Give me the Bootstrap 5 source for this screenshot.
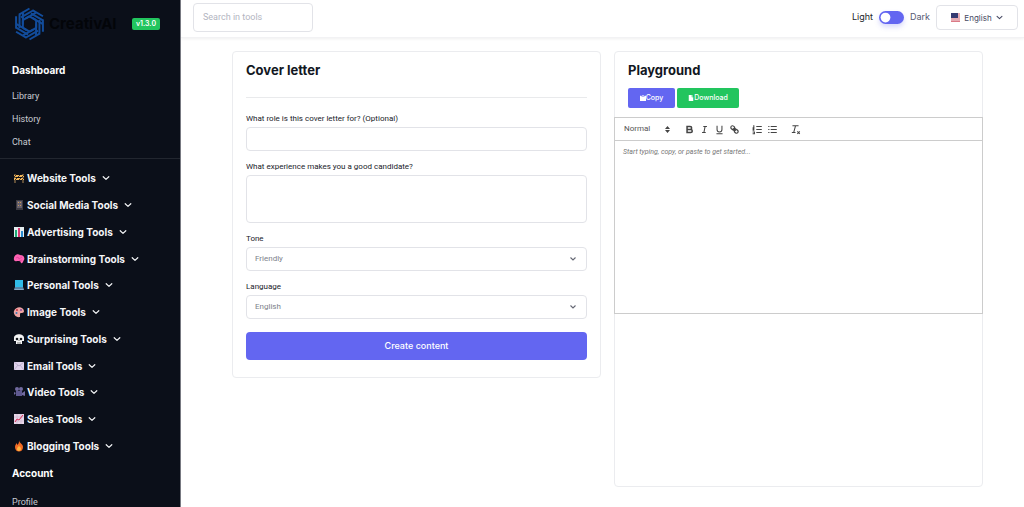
<!DOCTYPE html>
<html lang="en">
<head>
<meta charset="utf-8">
<meta name="viewport" content="width=device-width, initial-scale=1">
<title>CreativAI - Cover letter</title>
<link rel="stylesheet" href="https://cdn.jsdelivr.net/npm/bootstrap@5.3.0/dist/css/bootstrap.min.css">
<style>
:root{--indigo:#6366f1;--green:#22c55e;--line:#e2e3e8}
body{font-family:Inter,"Liberation Sans",sans-serif;font-size:9px;line-height:12px;color:#33353d;background:#fff}
a{color:inherit;text-decoration:none}
.sidebar{width:181px;height:100vh;background:#0b0f19;border-right:1px solid #777981;color:#f5f6f8}
.brand{height:48px;padding:0 20px 0 14px}
.brand-name{font-size:15px;font-weight:700;color:#030509;line-height:20px}
.version{background:var(--green);font-size:7px;font-weight:600;line-height:12px;padding:0 4px;border-radius:2px;color:#fff}
.side-head{font-size:10px;font-weight:700;line-height:20px;padding:0 12px}
.side-link{line-height:23px;padding:0 12px;color:#c9cbd1;font-weight:400;font-size:9px;font-family:Roboto,Inter,sans-serif}
.side-links{padding-top:5px}
.side-rule{height:1px;background:#22262f;margin:4px 0 6px}
.tools{height:294px}
.tool{flex:1;padding:0 12px;font-size:10px;font-weight:700}
.tool .chev{margin-left:6px}
.emoji{width:14px;height:12px;margin-right:1px}
.chev{width:8px;height:8px;fill:none;stroke:currentColor;stroke-width:1.2;stroke-linecap:round;stroke-linejoin:round}
.topbar{height:38px;padding:0 6px 0 12px;border-bottom:1px solid #f2f2f4;box-shadow:0 1px 3px #00000010}
.form-control,.form-select{font-family:Roboto,Inter,sans-serif;font-size:8px;line-height:12px;border-color:var(--line);border-radius:4px;color:#7c7f8a;padding:5px 8px;min-height:0}
.search{width:120px;height:29px;margin-bottom:3px;padding:0 9px;font-size:9px}
.search::placeholder{color:#b3b5bf}
.mode{font-size:9px;color:#565973;margin-bottom:3px;gap:6px}
.form-switch .form-check-input{width:25px;height:13px;margin:0;float:none;border:0;background-color:var(--indigo);box-shadow:0 3px 5px #6366f140;background-size:13px;background-image:url("data:image/svg+xml,%3Csvg xmlns='http://www.w3.org/2000/svg' viewBox='-4 -4 8 8'%3E%3Ccircle r='3' fill='%23fff'/%3E%3C/svg%3E")}
.lang-btn{width:82px;height:25px;font-size:8px;border:1px solid var(--line);border-radius:4px;color:#454862;padding:0;margin:0 0 2px 6px}
.lang-btn .chev{width:7px;height:7px}
.work{padding:13px 41px 20px 51px}
.panels{gap:13px}
.panel{border:1px solid #ebecef;border-radius:4px}
.panel h1,.panel h2{font-size:13px;line-height:18px;font-weight:700;color:#121722;margin:0}
.letter{padding:9px 13px 17px}
.letter hr{margin:18px 0 15px;color:#c8cad0;opacity:.4}
.letter label{font-family:Roboto,Inter,sans-serif;font-size:8px;font-weight:400;line-height:12px;margin-bottom:2px;display:block;color:#202229}
.one-line{height:24px}
.letter .form-control,.letter .form-select{margin-bottom:10px}
.letter textarea.form-control{height:48px;resize:none}
.form-select{background-image:url("data:image/svg+xml,%3Csvg xmlns='http://www.w3.org/2000/svg' viewBox='0 0 8 8'%3E%3Cpath d='M1.5 2.5 4 5l2.5-2.5' fill='none' stroke='%23656874' stroke-width='1.1'/%3E%3C/svg%3E");background-size:8px;background-position:right 9px center}
.create{background:var(--indigo);color:#fff;font-size:9px;font-weight:500;height:28px;padding:0;border-radius:4px;margin-top:3px}
.create:hover{background:#4f52df;color:#fff}
.playground{height:436px}
.play-head{padding:9px 13px 9px}
.play-actions{margin-top:9px;gap:2px}
.small-btn{height:20px;padding:0;font-size:7px;font-weight:500;color:#fff;border:0;border-radius:2px}
.copy-btn{width:47px;background:var(--indigo)}
.save-btn{width:62px;background:var(--green)}
.small-btn svg{width:6px;height:6px;fill:#fff}
.editor{border:1px solid #ccc;margin:0 -1px;color:#444}
.editor-tools{height:23px;border-bottom:1px solid #ccc;padding:0 9px}
.format{width:41px;border:0;background:none;appearance:none;padding:0;font-size:8px;color:#555;line-height:12px;font-family:Roboto,Inter,sans-serif}
.tool-btn{border:0;background:none;padding:0;width:15px;height:14px;line-height:0}
.tool-btn svg{width:11px;height:11px;fill:none;stroke:#444;stroke-width:1.7}
.editing{height:172px;border:0;border-radius:0;padding:5px 8px;font-size:7px;resize:none;font-family:Roboto,Inter,sans-serif}
.editing::placeholder{font-style:italic;color:#777}
</style>
</head>
<body>
<svg class="d-none"><defs>
<symbol id="down" viewBox="0 0 8 8"><path d="M1.2 2.7 4 5.4l2.8-2.7"/></symbol>
</defs></svg>
<div class="d-flex">
<nav class="sidebar flex-shrink-0 sticky-top overflow-hidden">
  <div class="brand d-flex align-items-center">
    <svg width="31" height="34" viewBox="0 0 30 34" fill="none" stroke="#124c9b" stroke-width="2" aria-hidden="true"><defs><g id="arm"><path d="M15 1.500 4.500 7.600M18.500 3.500 6.500 10.400M21.500 5.700 8.300 13.200"/><path d="M8.300 13.200v4.300"/></g></defs><use href="#arm"/><use href="#arm" transform="rotate(60 15 17)"/><use href="#arm" transform="rotate(120 15 17)"/><use href="#arm" transform="rotate(180 15 17)"/><use href="#arm" transform="rotate(240 15 17)"/><use href="#arm" transform="rotate(300 15 17)"/></svg>
    <a href="#" class="brand-name ms-1">CreativAI</a><span class="version ms-auto">v1.3.0</span>
  </div>
  <div class="side-head mt-2 pt-1 text-white"><a href="#">Dashboard</a></div>
  <div class="side-links">
  <a href="#" class="side-link d-block">Library</a>
  <a href="#" class="side-link d-block">History</a>
  <a href="#" class="side-link d-block">Chat</a>
  </div>
  <div class="side-rule"></div>
  <div class="tools d-flex flex-column">
    <a href="#" class="tool d-flex align-items-center"><svg class="emoji" viewBox="0 0 14 12"><path d="M3 2v9M11 2v9" stroke="#98794e" stroke-width="1.2"/><path d="M2 3h10v2H2zM2 6h10v2H2z" fill="#f3b759"/><path d="m4 3-2 2m6-2L6 5m6-2-2 2M5 6 3 8m6-2L7 8m5-2-2 2" stroke="#3b2f26"/></svg>Website Tools<svg class="chev"><use href="#down"/></svg></a>
    <a href="#" class="tool d-flex align-items-center"><svg class="emoji" viewBox="0 0 14 12"><path d="M4 1h7v10H4z" fill="#3c3b43"/><path d="M5 2h5v7H5z" fill="#65606d"/><path d="M6 3h1v1H6zM8 3h1v1H8zM6 6h1v1H6zM8 6h1v1H8z" fill="#c69857"/></svg>Social Media Tools<svg class="chev"><use href="#down"/></svg></a>
    <a href="#" class="tool d-flex align-items-center"><svg class="emoji" viewBox="0 0 14 12"><rect x="2" y="1" width="10" height="10" fill="#e5edf0"/><path d="M3 4h2v7H3z" fill="#1cab75"/><path d="M6 2h2v9H6z" fill="#d73d73"/><path d="M9 5h2v6H9z" fill="#278bd1"/></svg>Advertising Tools<svg class="chev"><use href="#down"/></svg></a>
    <a href="#" class="tool d-flex align-items-center"><svg class="emoji" viewBox="0 0 14 12"><path d="M2 7C1 3 5 0 8 2c4 0 5 3 4 5-1 1-1 4-3 3L8 8H5Q3 9 2 7" fill="#ff62b3"/><path d="m4 5 2-1 1 2 3-2M7 8l3-1" fill="none" stroke="#d53892" stroke-width=".6"/></svg>Brainstorming Tools<svg class="chev"><use href="#down"/></svg></a>
    <a href="#" class="tool d-flex align-items-center"><svg class="emoji" viewBox="0 0 14 12"><path d="M3 1h8v7H3z" fill="#31bce8"/><path d="M3 8h8l1 3H2z" fill="#87a9c5"/><path d="M3 9h8" stroke="#27648b"/></svg>Personal Tools<svg class="chev"><use href="#down"/></svg></a>
    <a href="#" class="tool d-flex align-items-center"><svg class="emoji" viewBox="0 0 14 12"><path d="M8 11C4 12 1 8 2 5c2-5 9-5 10 0 0 3-4 1-4 3z" fill="#efa4a3"/><circle cx="5" cy="4" r="1" fill="#c93446"/><circle cx="9" cy="4" r="1" fill="#8a4b9d"/><circle cx="4.500" cy="7" r="1" fill="#3d79b4"/></svg>Image Tools<svg class="chev"><use href="#down"/></svg></a>
    <a href="#" class="tool d-flex align-items-center"><svg class="emoji" viewBox="0 0 14 12"><path d="M2 5c0-5 10-5 10 0v3H10v3H4V8H2z" fill="#f4f4f5"/><circle cx="5" cy="6" r="1.300" fill="#17191f"/><circle cx="9" cy="6" r="1.300" fill="#17191f"/><path d="M7 7v1M6 9v2M8 9v2" stroke="#444" stroke-width=".7"/></svg>Surprising Tools<svg class="chev"><use href="#down"/></svg></a>
    <a href="#" class="tool d-flex align-items-center"><svg class="emoji" viewBox="0 0 14 12"><path d="M2 2h10v8H2z" fill="#e0d3ec"/><path d="m2 2 5 4 5-4M2 10l4-5m6 5L8 5" fill="none" stroke="#ad9fc0" stroke-width=".7"/></svg>Email Tools<svg class="chev"><use href="#down"/></svg></a>
    <a href="#" class="tool d-flex align-items-center"><svg class="emoji" viewBox="0 0 14 12"><circle cx="5" cy="3" r="2" fill="#716aa0"/><circle cx="9" cy="3" r="2" fill="#716aa0"/><path d="M4 5h6v5H4z" fill="#5f5990"/><path d="m10 7 3-2v5l-3-1zM4 7 2 6v3z" fill="#716aa0"/></svg>Video Tools<svg class="chev"><use href="#down"/></svg></a>
    <a href="#" class="tool d-flex align-items-center"><svg class="emoji" viewBox="0 0 14 12"><path d="M2 1h10v10H2z" fill="#e8d7e9"/><path d="M2 4h10M2 8h10M5 1v10M9 1v10" stroke="#c1a9c5" stroke-width=".5"/><path d="m3 9 2-3 2 1 4-5" fill="none" stroke="#dc2d56"/></svg>Sales Tools<svg class="chev"><use href="#down"/></svg></a>
    <a href="#" class="tool d-flex align-items-center"><svg class="emoji" viewBox="0 0 14 12"><path d="M7 0c0 3 4 4 4 7 0 6-8 6-8 0 0-2 1-3 2-4v2c2-1 2-3 2-5" fill="#f36b24"/><path d="M7 5c0 2 2 2 2 4s-4 3-4 0c0-2 2-2 2-4" fill="#ffb642"/></svg>Blogging Tools<svg class="chev"><use href="#down"/></svg></a>
  </div>
  <div class="side-head pt-1 mb-2 text-white">Account</div>
  <a href="#" class="side-link d-block">Profile</a>
</nav>
<div class="flex-grow-1">
  <header class="topbar d-flex align-items-center">
    <input class="form-control search" type="search" placeholder="Search in tools" aria-label="Search in tools">
    <div class="mode d-flex align-items-center ms-auto">
      <label for="mode" class="text-dark">Light</label>
      <div class="form-switch p-0 d-flex"><input class="form-check-input" type="checkbox" role="switch" id="mode" aria-label="Dark mode"></div>
      <label for="mode">Dark</label>
    </div>
    <button type="button" class="btn lang-btn d-flex align-items-center justify-content-center"><svg width="9" height="9" viewBox="0 0 9 9"><path fill="#f2dfe3" d="M0 0h9v9H0z"/><path d="M0 1h9M0 3h9M0 5h9M0 7h9M0 8.500h9" stroke="#d4606e" stroke-width=".8"/><path fill="#343b72" d="M0 0h7v5H0z"/></svg><span class="ms-1">English</span><svg class="chev ms-1"><use href="#down"/></svg></button>
  </header>
  <main class="work">
    <div class="row m-0 align-items-start flex-nowrap panels">
      <section class="col p-0"><form class="panel letter">
        <h1>Cover letter</h1><hr>
        <label for="role">What role is this cover letter for? (Optional)</label>
        <input id="role" class="form-control one-line">
        <label for="experience">What experience makes you a good candidate?</label>
        <textarea id="experience" class="form-control"></textarea>
        <label for="tone">Tone</label>
        <select id="tone" class="form-select one-line"><option>Friendly</option></select>
        <label for="language">Language</label>
        <select id="language" class="form-select one-line"><option>English</option></select>
        <button type="button" class="btn create w-100">Create content</button>
      </form></section>
      <section class="col p-0"><div class="panel playground">
        <div class="play-head"><h2>Playground</h2>
          <div class="d-flex play-actions">
            <button type="button" class="small-btn copy-btn"><svg viewBox="0 0 8 8"><path d="M0 1h2v1h4V1h2v7H0zM3 0h2v1H3z"/></svg>Copy</button>
            <button type="button" class="small-btn save-btn"><svg viewBox="0 0 8 8"><path d="M1 0h4v3h2v5H1zM5.500 0 7 2H5.500z"/></svg>Download</button>
          </div>
        </div>
        <div class="editor">
          <div class="editor-tools d-flex align-items-center">
            <div class="d-flex align-items-center me-2"><select class="format" aria-label="Text style"><option>Normal</option></select><svg width="5" height="7" viewBox="0 0 5 7" fill="#444"><path d="m0 3 2.500-3L5 3zM0 4h5L2.500 7z"/></svg></div>
            <button type="button" class="tool-btn ms-1" aria-label="Bold"><svg viewBox="0 0 18 18"><path stroke-width="2.500" d="M5 4h5a2.500 2.500 0 0 1 0 5H5zM5 9h6a2.500 2.500 0 0 1 0 5H5z"/></svg></button>
            <button type="button" class="tool-btn" aria-label="Italic"><svg viewBox="0 0 18 18"><path d="M7 4h6M5 14h6M8 14l2-10"/></svg></button>
            <button type="button" class="tool-btn" aria-label="Underline"><svg viewBox="0 0 18 18"><path d="M5 3v6a4 4 0 0 0 8 0V3M4 16h10"/></svg></button>
            <button type="button" class="tool-btn me-2" aria-label="Link"><svg viewBox="0 0 18 18"><path stroke-width="2" d="m7 7 4 4M9 5C7 2 3 2 3 6c0 2 2 2 4 4 2 0 3-2 2-5m0 8c2 3 6 3 6-1 0-2-2-2-4-4-2 0-3 2-2 5"/></svg></button>
            <button type="button" class="tool-btn" aria-label="Numbered list"><svg viewBox="0 0 18 18"><path d="M7 4h9M7 9h9M7 14h9M2 3h1v3M1 6h3M1 8h2v2H1m0 3h3v3H1"/></svg></button>
            <button type="button" class="tool-btn me-2" aria-label="Bulleted list"><svg viewBox="0 0 18 18"><path d="M6 4h10M6 9h10M6 14h10M2 4h2M2 9h2M2 14h2"/></svg></button>
            <button type="button" class="tool-btn" aria-label="Clear formatting"><svg viewBox="0 0 18 18"><path d="M4 3h10M6 14l3-11M3 14h6m3-2 4 4m0-4-4 4"/></svg></button>
          </div>
          <textarea class="editing d-block w-100" aria-label="Playground text" placeholder="Start typing, copy, or paste to get started..."></textarea>
        </div>
      </div></section>
    </div>
  </main>
</div>
</div>
<script src="https://cdn.jsdelivr.net/npm/bootstrap@5.3.0/dist/js/bootstrap.bundle.min.js"></script>
</body>
</html>
